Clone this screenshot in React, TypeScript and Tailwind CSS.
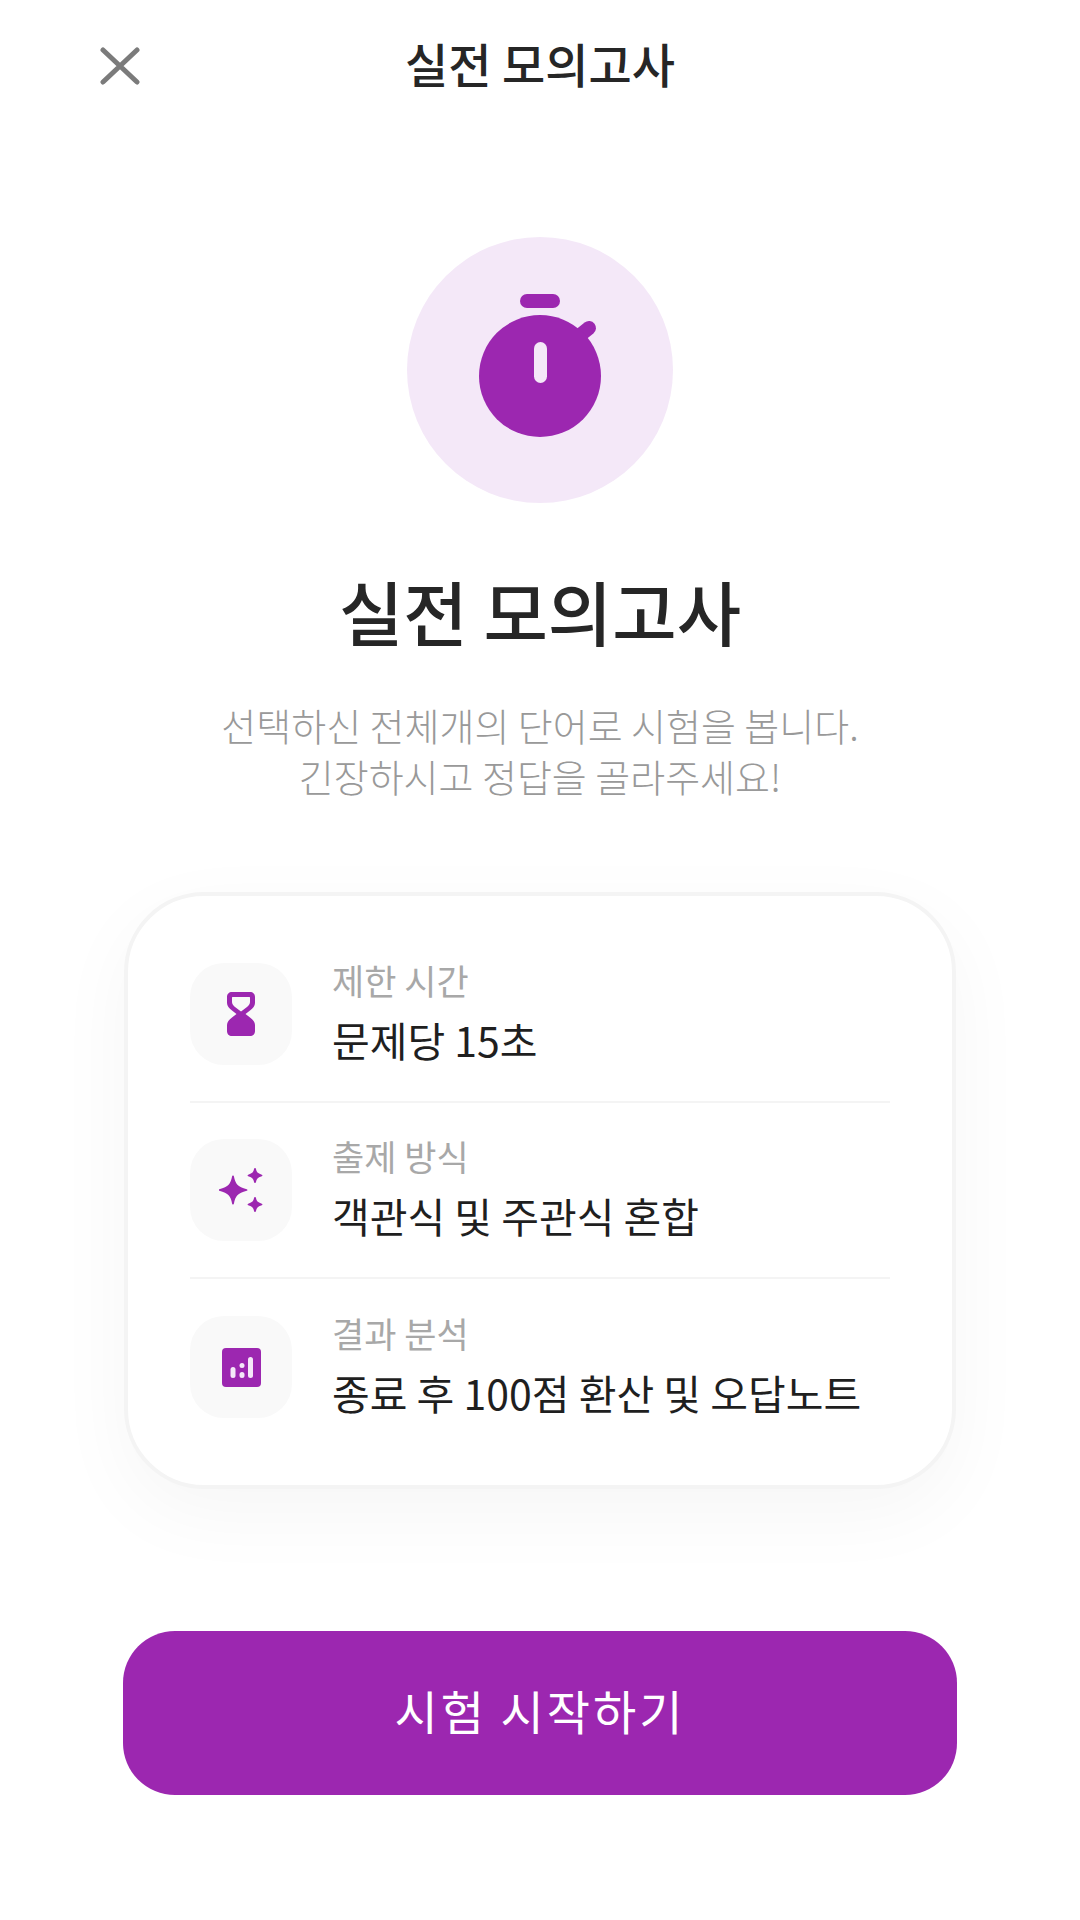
const KR = "font-['Noto_Sans_CJK_KR','Noto_Sans',sans-serif]";

function Row({ label, value, icon, divider }: { label: string; value: string; icon: React.ReactNode; divider?: boolean }) {
  return (
    <div className={`flex items-center h-[176px] ${divider ? "border-b-2 border-[#f4f4f4]" : ""}`}>
      <div className="w-[102px] h-[102px] rounded-[34px] bg-[#f9f9f9] flex items-center justify-center shrink-0">{icon}</div>
      <div className="ml-[40px] flex flex-col pb-[4px]">
        <span className="text-[35px] leading-[48px] text-[#a8a8a8]">{label}</span>
        <span className="text-[41px] leading-[58px] mt-[6px] text-[#1f1f1f]">{value}</span>
      </div>
    </div>
  );
}

export default function App() {
  return (
    <div className={`w-[1080px] h-[1920px] bg-white flex flex-col items-center overflow-hidden ${KR}`}>
      <header className="relative w-full h-[124px] flex items-center justify-center">
        <svg className="absolute left-[100px] top-[47px]" width="40" height="38" viewBox="0 0 40 38" fill="none" stroke="#7b7b7b" strokeWidth="5" strokeLinecap="round">
          <path d="M3 3 L37 35 M37 3 L3 35" />
        </svg>
        <h1 className="text-[47px] font-medium text-[#262626] leading-none">실전 모의고사</h1>
      </header>
      <div className="mt-[113px] w-[266px] h-[266px] rounded-full bg-[#f4e8f8] shrink-0">
        <svg width="266" height="266" viewBox="0 0 266 266">
          <rect x="113" y="57" width="40" height="14" rx="7" fill="#9c27b0" />
          <path d="M172 99 L182 91" stroke="#9c27b0" strokeWidth="14" strokeLinecap="round" />
          <circle cx="133" cy="139" r="61" fill="#9c27b0" />
          <rect x="127" y="105" width="13" height="41" rx="6.500" fill="#f4e8f8" />
        </svg>
      </div>
      <h2 className="mt-[58px] text-[70px] leading-[100px] font-medium text-[#262626]">실전 모의고사</h2>
      <p className="mt-[38px] text-center text-[38px] leading-[51px] font-light text-[#999999]">
        선택하신 전체개의 단어로 시험을 봅니다.<br />긴장하시고 정답을 골라주세요!
      </p>
      <section className="mt-[91px] w-[832px] h-[597px] rounded-[80px] border-[4px] border-[#f4f4f4] bg-white shadow-[0_24px_80px_rgba(0,0,0,0.04)] px-[62px] pt-[31px] shrink-0">
        <Row
          divider
          label="제한 시간"
          value="문제당 15초"
          icon={
            <svg width="28" height="44" viewBox="0 0 28 44">
              <path fillRule="evenodd" fill="#9c27b0" d="M5 0H23C26 0 28 2 28 5V11C28 14 26 16 23 18.500L18.500 22L23 25.500C26 28 28 30 28 33V39C28 42 26 44 23 44H5C2 44 0 42 0 39V33C0 30 2 28 5 25.500L9.500 22L5 18.500C2 16 0 14 0 11V5C0 2 2 0 5 0ZM6 5C5 5 5 5.500 5 6V10C5 12 6 13 8 15L14 19.500L20 15C22 13 23 12 23 10V6C23 5.500 23 5 22 5Z" />
            </svg>
          }
        />
        <Row
          divider
          label="출제 방식"
          value="객관식 및 주관식 혼합"
          icon={
            <svg width="44" height="44" viewBox="0 0 44 44" fill="#9c27b0" stroke="#9c27b0" strokeWidth="1.800" strokeLinejoin="round">
              <path d="M14 8.500C15.500 16.500 18 19.500 27.500 22C18 24.500 15.500 27.500 14 35.500C12.500 27.500 10 24.500 0.500 22C10 19.500 12.500 16.500 14 8.500Z" />
              <path d="M36 1C36.800 5 38 6 42.500 7.500C38 9 36.800 10 36 14C35.200 10 34 9 29.500 7.500C34 6 35.200 5 36 1Z" />
              <path d="M36 30C36.800 34 38 35 42.500 36.500C38 38 36.800 39 36 43C35.200 39 34 38 29.500 36.500C34 35 35.200 34 36 30Z" />
            </svg>
          }
        />
        <Row
          label="결과 분석"
          value="종료 후 100점 환산 및 오답노트"
          icon={
            <svg width="39" height="39" viewBox="0 0 39 39">
              <rect width="39" height="39" rx="4" fill="#9c27b0" />
              <g fill="#f4e8f8">
                <rect x="8.500" y="19" width="5" height="11" rx="2.500" />
                <rect x="17.500" y="15" width="5" height="5" rx="2.500" />
                <rect x="17.500" y="24" width="5" height="6" rx="2.500" />
                <rect x="26" y="9" width="5" height="21" rx="2.500" />
              </g>
            </svg>
          }
        />
      </section>
      <button className="mt-[142px] w-[834px] h-[164px] rounded-[52px] bg-[#9c27b0] text-white text-[47px] tracking-[3px] pb-[6px] shrink-0">
        시험 시작하기
      </button>
    </div>
  );
}
